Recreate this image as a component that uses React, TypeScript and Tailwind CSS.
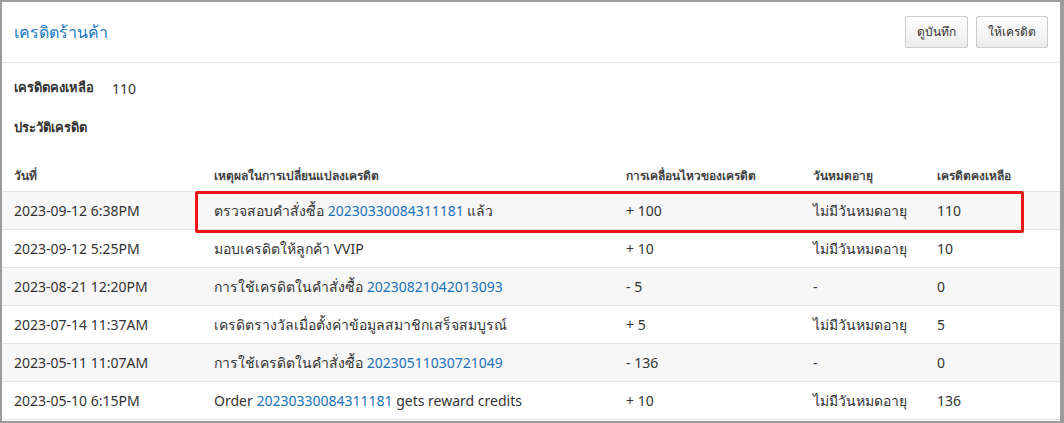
import React from "react";

const rows: { d: string; r: React.ReactNode; c: string; e: string; b: string }[] = [
  { d: "2023-09-12 6:38PM", r: <>ตรวจสอบคำสั่งซื้อ <a className="text-[#1a73b8]">20230330084311181</a> แล้ว</>, c: "+ 100", e: "ไม่มีวันหมดอายุ", b: "110" },
  { d: "2023-09-12 5:25PM", r: <>มอบเครดิตให้ลูกค้า VVIP</>, c: "+ 10", e: "ไม่มีวันหมดอายุ", b: "10" },
  { d: "2023-08-21 12:20PM", r: <>การใช้เครดิตในคำสั่งซื้อ <a className="text-[#1a73b8]">20230821042013093</a></>, c: "- 5", e: "-", b: "0" },
  { d: "2023-07-14 11:37AM", r: <>เครดิตรางวัลเมื่อตั้งค่าข้อมูลสมาชิกเสร็จสมบูรณ์</>, c: "+ 5", e: "ไม่มีวันหมดอายุ", b: "5" },
  { d: "2023-05-11 11:07AM", r: <>การใช้เครดิตในคำสั่งซื้อ <a className="text-[#1a73b8]">20230511030721049</a></>, c: "- 136", e: "-", b: "0" },
  { d: "2023-05-10 6:15PM", r: <>Order <a className="text-[#1a73b8]">20230330084311181</a> gets reward credits</>, c: "+ 10", e: "ไม่มีวันหมดอายุ", b: "136" },
];

export default function App() {
  return (
    <div className="w-[1064px] h-[423px] bg-[#9c9c9c] pl-[2px] pt-[2px] pr-[4px] pb-[2px] overflow-hidden" style={{ fontFamily: '"Noto Sans", "Open Sans", sans-serif' }}>
      <div className="bg-white h-full text-[#333]">
        <div className="h-[61px] flex items-center justify-between pl-[12px] pr-[12px] border-b border-[#e3e3e3]">
          <div className="text-[16px] text-[#1a7bc1]">เครดิตร้านค้า</div>
          <div className="flex gap-[8px]">
            <button className="h-[32px] px-[11px] text-[12px] border border-[#ccc] rounded-[2px] bg-gradient-to-b from-white to-[#ececec] text-[#333]">ดูบันทึก</button>
            <button className="h-[32px] px-[11px] text-[12px] border border-[#ccc] rounded-[2px] bg-gradient-to-b from-white to-[#ececec] text-[#333]">ให้เครดิต</button>
          </div>
        </div>
        <div className="px-[12px] pt-[12px] text-[13px]">
          <div className="flex gap-[18px] h-[26px] items-center"><span className="font-bold">เครดิตคงเหลือ</span><span className="text-[14px]">110</span></div>
          <div className="font-bold h-[26px] mt-[14px] flex items-center">ประวัติเครดิต</div>
        </div>
        <div className="relative mt-[20px]">
          <div className="grid grid-cols-[200px_412px_187px_124px_1fr] text-[12px] font-bold text-[#444] h-[31px] items-center border-b border-[#e3e3e3] pl-[12px]">
            <div>วันที่</div><div>เหตุผลในการเปลี่ยนแปลงเครดิต</div><div>การเคลื่อนไหวของเครดิต</div><div>วันหมดอายุ</div><div>เครดิตคงเหลือ</div>
          </div>
          {rows.map((r, i) => (
            <div key={i} className={`grid grid-cols-[200px_412px_187px_124px_1fr] text-[14px] h-[38px] items-center border-b border-[#e3e3e3] pl-[12px] ${i % 2 === 0 ? "bg-[#f7f7f7]" : "bg-white"}`}>
              <div>{r.d}</div><div>{r.r}</div><div>{r.c}</div><div>{r.e}</div><div>{r.b}</div>
            </div>
          ))}
          <div className="absolute left-[193px] top-[30px] w-[829px] h-[42px] border-[3px] border-[#f01414] rounded-[2px] pointer-events-none" />
        </div>
      </div>
    </div>
  );
}
